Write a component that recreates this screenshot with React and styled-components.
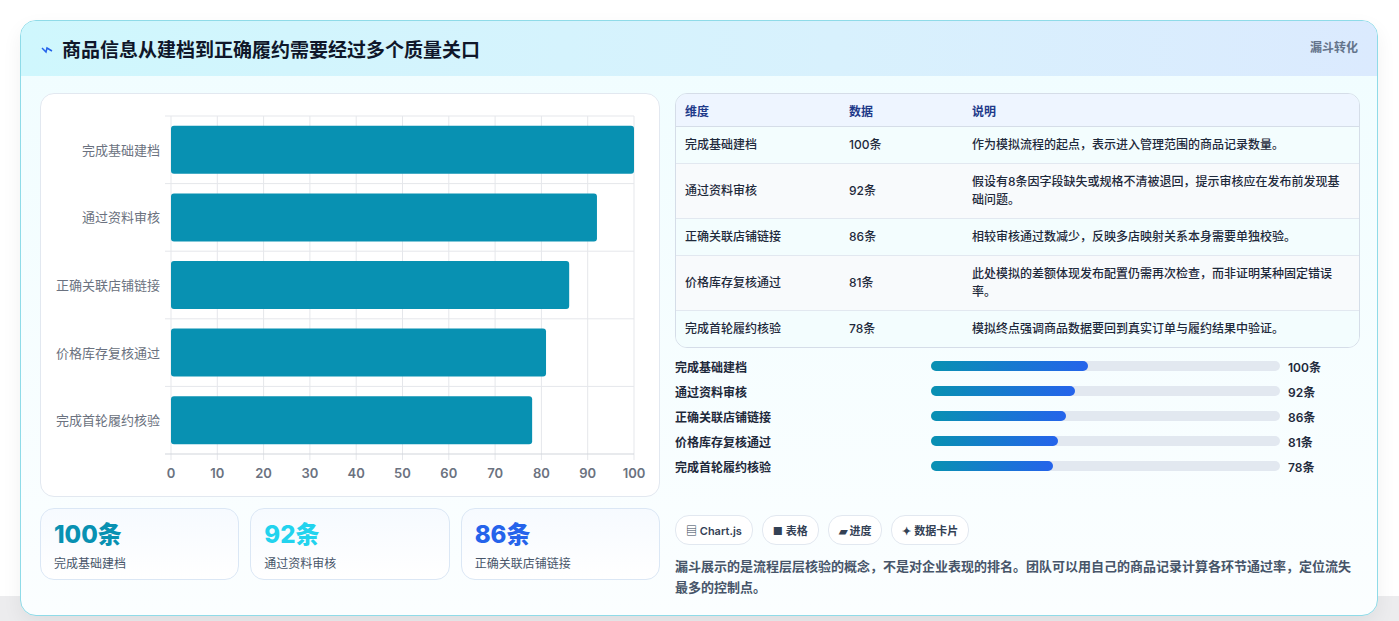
import React from 'react';
import styled, { createGlobalStyle } from 'styled-components';

const GlobalStyle = createGlobalStyle`
  body {
    margin: 0;
    background: #ececee;
    font-family: Inter, "Noto Sans CJK SC", sans-serif;
  }
`;

const data = [
  { name: '完成基础建档', value: 100, note: '作为模拟流程的起点，表示进入管理范围的商品记录数量。' },
  { name: '通过资料审核', value: 92, note: '假设有8条因字段缺失或规格不清被退回，提示审核应在发布前发现基础问题。' },
  { name: '正确关联店铺链接', value: 86, note: '相较审核通过数减少，反映多店映射关系本身需要单独校验。' },
  { name: '价格库存复核通过', value: 81, note: '此处模拟的差额体现发布配置仍需再次检查，而非证明某种固定错误率。' },
  { name: '完成首轮履约核验', value: 78, note: '模拟终点强调商品数据要回到真实订单与履约结果中验证。' },
];

const Page = styled.div`
  padding: 20px 21px 22px 20px;
  background: linear-gradient(#fff 0, #fff 596px, #ececee 596px);
`;

const Card = styled.div`
  border: 1px solid #8fdbe8;
  border-radius: 16px;
  background: linear-gradient(180deg, #f0fdff 0%, #fbfeff 100%);
  overflow: hidden;
  box-shadow: 0 8px 20px rgba(0, 0, 0, 0.06);
`;

const Header = styled.div`
  height: 55px;
  display: flex;
  align-items: center;
  justify-content: space-between;
  padding: 0 19px 0 20px;
  background: linear-gradient(90deg, #cff7fd 0%, #d8f1fd 60%, #dbeafe 100%);
`;

const Title = styled.h1`
  margin: 0;
  display: flex;
  align-items: center;
  gap: 9px;
  font-size: 19px;
  font-weight: 700;
  color: #0f172a;
`;

const Tag = styled.span`
  align-self: flex-start;
  margin-top: 17px;
  font-size: 12px;
  font-weight: 700;
  color: #64748b;
`;

const Body = styled.div`
  display: grid;
  grid-template-columns: 620px 1fr;
  gap: 15px;
  padding: 17px 17px 17px 19px;
`;

const Col = styled.div`
  display: flex;
  flex-direction: column;
`;

const ChartBox = styled.div`
  height: 402px;
  border: 1px solid #e2e8f0;
  border-radius: 14px;
  background: #fff;
`;

const Stats = styled.div`
  display: grid;
  grid-template-columns: repeat(3, 1fr);
  gap: 11px;
  margin-top: 11px;
`;

const Stat = styled.div`
  height: 72px;
  box-sizing: border-box;
  border: 1px solid #dbe7f5;
  border-radius: 14px;
  background: linear-gradient(180deg, #f6faff, #fff);
  padding: 12px 13px;
`;

const StatNum = styled.div`
  font-size: 24px;
  font-weight: 800;
  line-height: 28px;
  color: ${p => p.color};
`;

const StatLabel = styled.div`
  font-size: 12px;
  color: #475569;
  margin-top: 5px;
`;

const Table = styled.table`
  width: 100%;
  border-collapse: separate;
  border-spacing: 0;
  border: 1px solid #d5dde8;
  border-radius: 12px;
  overflow: hidden;
  font-size: 12px;
  color: #1e293b;
  th {
    background: #eef5ff;
    color: #1e3a8a;
    text-align: left;
    font-weight: 700;
    height: 32px;
    padding: 0 9px;
    border-bottom: 1px solid #d5dde8;
  }
  td {
    padding: 9px 9px;
    line-height: 18px;
    font-weight: 500;
    border-bottom: 1px solid #e2e8f0;
    vertical-align: middle;
  }
  tr:last-child td { border-bottom: none; }
  tbody tr:nth-child(odd) td { background: #f3fdfe; }
  tbody tr:nth-child(even) td { background: #f8fafc; }
`;

const Bars = styled.div`
  margin-top: 9px;
  display: flex;
  flex-direction: column;
  gap: 7px;
`;

const BarRow = styled.div`
  display: grid;
  grid-template-columns: 256px 357px 1fr;
  align-items: center;
  height: 18px;
  font-size: 12px;
  font-weight: 600;
  color: #1e293b;
`;

const Track = styled.div`
  height: 10px;
  border-radius: 5px;
  background: #e2e8f0;
  margin-right: 8px;
`;

const Fill = styled.div`
  height: 100%;
  border-radius: 5px;
  background: linear-gradient(90deg, #0891b2, #2563eb);
`;

const Chips = styled.div`
  display: flex;
  gap: 9px;
  margin-top: 40px;
`;

const Chip = styled.span`
  height: 28px;
  padding: 0 10px;
  display: flex;
  align-items: center;
  gap: 4px;
  border: 1px solid #e2e8f0;
  border-radius: 14px;
  background: #fff;
  font-size: 11px;
  font-weight: 600;
  color: #334155;
`;

const Para = styled.p`
  margin: 11px 0 0;
  font-size: 13px;
  line-height: 21px;
  font-weight: 600;
  color: #475569;
`;

const Chart = () => {
  const x0 = 130, x1 = 593, y0 = 22, y1 = 360;
  const step = (y1 - y0) / 5;
  return (
    <svg width="620" height="402">
      {Array.from({ length: 11 }, (_, i) => {
        const x = x0 + (i * (x1 - x0)) / 10;
        return (
          <g key={i}>
            <line x1={x} y1={y0} x2={x} y2={y1 + 6} stroke="#e5e7eb" />
            <text x={x} y={384} textAnchor="middle" fontSize="13" fontWeight="600" fill="#6b7280" fontFamily="Inter, sans-serif">{i * 10}</text>
          </g>
        );
      })}
      {Array.from({ length: 6 }, (_, i) => (
        <line key={i} x1={x0 - 6} x2={x1} y1={y0 + i * step} y2={y0 + i * step} stroke={i === 5 ? '#d1d5db' : '#e5e7eb'} />
      ))}
      {data.map((d, i) => {
        const cy = y0 + step * i + step / 2;
        return (
          <g key={d.name}>
            <rect x={x0} y={cy - 24} width={(d.value / 100) * (x1 - x0)} height={48} rx="3" fill="#0891b2" />
            <text x={x0 - 11} y={cy + 5} textAnchor="end" fontSize="13" fill="#6b7280" fontFamily="'Noto Sans CJK SC', sans-serif">{d.name}</text>
          </g>
        );
      })}
    </svg>
  );
};

export default function App() {
  return (
    <Page>
      <GlobalStyle />
      <Card>
        <Header>
          <Title>
            <svg width="12" height="12" viewBox="0 0 12 12"><path d="M1 5 L5 9 L6 5 L11 8" stroke="#2563eb" strokeWidth="1.5" fill="none" /></svg>
            商品信息从建档到正确履约需要经过多个质量关口
          </Title>
          <Tag>漏斗转化</Tag>
        </Header>
        <Body>
          <Col>
            <ChartBox><Chart /></ChartBox>
            <Stats>
              <Stat><StatNum color="#0891b2">100条</StatNum><StatLabel>完成基础建档</StatLabel></Stat>
              <Stat><StatNum color="#22d3ee">92条</StatNum><StatLabel>通过资料审核</StatLabel></Stat>
              <Stat><StatNum color="#2563eb">86条</StatNum><StatLabel>正确关联店铺链接</StatLabel></Stat>
            </Stats>
          </Col>
          <Col>
            <Table>
              <colgroup><col style={{ width: 164 }} /><col style={{ width: 123 }} /><col /></colgroup>
              <thead><tr><th>维度</th><th>数据</th><th>说明</th></tr></thead>
              <tbody>
                {data.map(d => (
                  <tr key={d.name}><td>{d.name}</td><td>{d.value}条</td><td>{d.note}</td></tr>
                ))}
              </tbody>
            </Table>
            <Bars>
              {data.map(d => (
                <BarRow key={d.name}>
                  <span>{d.name}</span>
                  <Track><Fill style={{ width: `${d.value * 0.45}%` }} /></Track>
                  <span>{d.value}条</span>
                </BarRow>
              ))}
            </Bars>
            <Chips>
              <Chip>▤ Chart.js</Chip>
              <Chip>■ 表格</Chip>
              <Chip>▰ 进度</Chip>
              <Chip>✦ 数据卡片</Chip>
            </Chips>
            <Para>漏斗展示的是流程层层核验的概念，不是对企业表现的排名。团队可以用自己的商品记录计算各环节通过率，定位流失最多的控制点。</Para>
          </Col>
        </Body>
      </Card>
    </Page>
  );
}
